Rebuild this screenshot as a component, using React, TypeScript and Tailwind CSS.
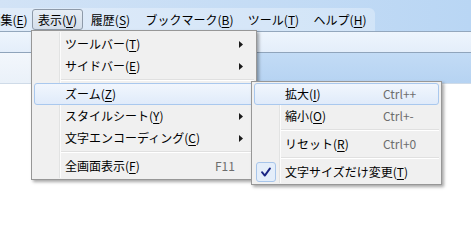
import React from "react"

const font = "font-['Noto_Sans_CJK_JP','Noto_Sans',sans-serif]"

type Item =
  | { sep: true }
  | { sep?: false; label: string; key: string; shortcut?: string; sub?: boolean; active?: boolean; checked?: boolean }

const viewMenu: Item[] = [
  { label: "ツールバー", key: "T", sub: true },
  { label: "サイドバー", key: "E", sub: true },
  { sep: true },
  { label: "ズーム", key: "Z", sub: true, active: true },
  { label: "スタイルシート", key: "Y", sub: true },
  { label: "文字エンコーディング", key: "C", sub: true },
  { sep: true },
  { label: "全画面表示", key: "F", shortcut: "F11" },
]

const zoomMenu: Item[] = [
  { label: "拡大", key: "I", shortcut: "Ctrl++", active: true },
  { label: "縮小", key: "O", shortcut: "Ctrl+-" },
  { sep: true },
  { label: "リセット", key: "R", shortcut: "Ctrl+0" },
  { sep: true },
  { label: "文字サイズだけ変更", key: "T", checked: true },
]

function Label({ label, k }: { label: string; k: string }) {
  return (
    <span className="whitespace-nowrap">
      {label}(<span className="underline underline-offset-2">{k}</span>)
    </span>
  )
}

function Arrow() {
  return (
    <svg width="4" height="7" viewBox="0 0 4 7" className="ml-auto mr-[11px]">
      <path d="M0 0 L4 3.5 L0 7 Z" fill="#1a1a1a" />
    </svg>
  )
}

function Check() {
  return (
    <div className="absolute left-[2px] top-[1px] w-[20px] h-[20px] rounded-[3px] border border-[#a7c5ea] bg-[#e4eefa] flex items-center justify-center">
      <svg width="12" height="12" viewBox="0 0 12 12">
        <path d="M2 6.2 L4.8 9.6 L10 2.4" fill="none" stroke="#1a2584" strokeWidth="1.9" strokeLinecap="round" strokeLinejoin="round" />
      </svg>
    </div>
  )
}

function Menu({ items, labelWidth, className }: { items: Item[]; labelWidth: string; className: string }) {
  return (
    <div
      className={`absolute border border-[#979797] bg-[#f0f0f0] shadow-[2px_2px_3px_rgba(0,0,0,0.35)] ${className}`}
    >
      <div className="absolute left-[27px] top-[1px] bottom-[1px] w-[2px] border-l border-[#e2e3e3] bg-white/80 border-r-0" />
      {items.map((it, i) =>
        it.sep ? (
          <div key={i} className="relative h-[6px] flex items-center pl-[29px] pr-[2px]">
            <div className="w-full h-[2px] border-t border-[#e0e0e0] bg-white" />
          </div>
        ) : (
          <div key={i} className="relative h-[22px] flex items-center mx-[2px] text-[12px] leading-[22px] text-black">
            {it.active && (
              <div className="absolute inset-0 rounded-[3px] border border-[#a9c8ee] bg-gradient-to-b from-[#f1f6fd] to-[#e0ebfa]" />
            )}
            {it.checked && <Check />}
            <div className={`relative pl-[31px] ${labelWidth}`}>
              <Label label={it.label} k={it.key} />
            </div>
            {it.shortcut && <span className="relative text-[#6d6d6d]">{it.shortcut}</span>}
            {it.sub && <Arrow />}
          </div>
        )
      )}
    </div>
  )
}

export default function App() {
  const bar = [
    { label: "編集", key: "E", w: "w-[46px] ml-[-15px]" },
    { label: "表示", key: "V", w: "w-[51px] ml-[1px]", pressed: true },
    { label: "履歴", key: "S", w: "w-[55px]" },
    { label: "ブックマーク", key: "B", w: "w-[103px]" },
    { label: "ツール", key: "T", w: "w-[65px]" },
    { label: "ヘルプ", key: "H", w: "w-[68px]" },
  ]

  return (
    <div className={`relative w-[471px] h-[210px] overflow-hidden bg-white ${font}`}>
      {/* menu bar */}
      <div className="h-[31px] bg-gradient-to-r from-[#d2e3f6] to-[#b9d6f4] flex items-end">
        <div className="h-[23px] w-[375px] rounded-tr-[6px] bg-white/30 flex items-start pt-[1px]">
          {bar.map((b) => (
            <div
              key={b.label}
              className={`h-[21px] flex items-center justify-center text-[12px] leading-[20px] text-black ${b.w} ${
                b.pressed
                  ? "rounded-[3px] border border-[#8e9aa9] bg-gradient-to-b from-[#e6edf5] to-[#d4deea]"
                  : ""
              }`}
            >
              <Label label={b.label} k={b.key} />
            </div>
          ))}
        </div>
      </div>
      <div className="h-px bg-[#93a7bd]" />
      {/* toolbar */}
      <div className="h-[20px] bg-gradient-to-b from-[#eef5fd] to-[#e4eefa]" />
      <div className="h-px bg-[#8fa4bb]" />
      {/* tab strip */}
      <div className="h-[30px] flex">
        <div className="w-[31px] bg-gradient-to-b from-[#f3f7fc] to-[#eaf1f9]" />
        <div className="flex-1 bg-gradient-to-b from-[#c2dbf5] to-[#b6d3f2]" />
      </div>
      <div className="h-px bg-[#cfdbe8]" />

      <Menu items={viewMenu} labelWidth="w-[181px]" className="left-[31px] top-[30px] w-[226px] pt-[2px] pb-[2px]" />
      <Menu items={zoomMenu} labelWidth="w-[129px]" className="left-[251px] top-[81px] w-[191px] pt-px pb-px" />
    </div>
  )
}
